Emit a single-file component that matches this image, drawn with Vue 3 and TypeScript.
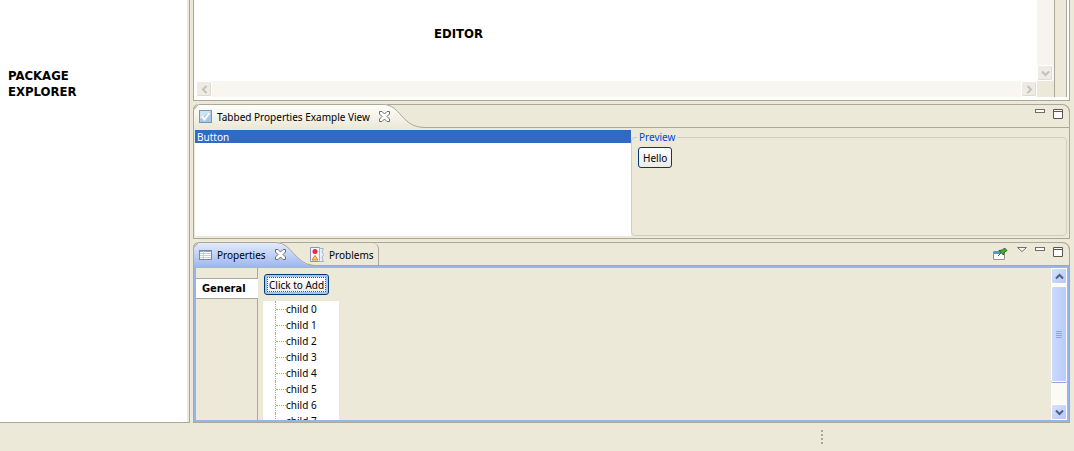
<script setup lang="ts">
import { ref } from 'vue'

const children = ref<string[]>(Array.from({ length: 8 }, (_, i) => `child ${i}`))
const selected = ref<number>(0)
const widgets: string[] = ['Button']

function addChild(): void {
  children.value.push(`child ${children.value.length}`)
}
</script>

<template>
  <div class="workbench">
    <div class="main">
      <aside class="explorer"><h2 class="area-title">PACKAGE<br />EXPLORER</h2></aside>

      <div class="stack">
        <section class="editor">
          <div class="editor-grid">
            <div class="canvas"><h2 class="area-title">EDITOR</h2></div>
            <div class="vtrack">
              <button class="scroll-btn off" aria-label="Scroll down">
                <svg width="9" height="9" viewBox="0 0 9 9"><path d="M1 2.5l3.5 3.5L8 2.5" /></svg>
              </button>
            </div>
            <div class="htrack">
              <button class="scroll-btn off" aria-label="Scroll left">
                <svg width="9" height="9" viewBox="0 0 9 9"><path d="M6.500 1L3 4.500L6.500 8" /></svg>
              </button>
              <button class="scroll-btn off" aria-label="Scroll right">
                <svg width="9" height="9" viewBox="0 0 9 9"><path d="M2.500 1L6 4.500L2.500 8" /></svg>
              </button>
            </div>
            <div class="corner"></div>
          </div>
          <div class="ruler"></div>
        </section>

        <section class="view">
          <header class="tabbar">
            <div class="tab example">
              <svg class="shape" width="236" height="24" viewBox="0 0 236 24">
                <defs>
                  <linearGradient id="pale" x1="0" y1="0" x2="0" y2="1">
                    <stop offset="0" stop-color="#fff" /><stop offset="1" stop-color="#ece9d8" />
                  </linearGradient>
                </defs>
                <path d="M0 24V6L5 0H190C206 0 208 23 232 23.500H236V24Z" fill="url(#pale)" />
                <path d="M0.500 24V6L5.500 0.500H190C208 0.500 208 23.500 232 23.500H236" fill="none" stroke="#aca899" />
              </svg>
              <button class="tab-label">
                <svg width="13" height="13" viewBox="0 0 13 13">
                  <rect x=".5" y=".5" width="12" height="12" fill="#a9c8e6" stroke="#7795b5" />
                  <path d="M1 1h11L1 9z" fill="#cfe2f3" />
                  <path d="M3 6.500l2.500 3L10.500 3" fill="none" stroke="#fff" stroke-width="2" />
                </svg>
                <span>Tabbed Properties Example View</span>
              </button>
              <button class="close" aria-label="Close Tabbed Properties Example View">
                <svg width="11" height="11" viewBox="0 0 11 11"><path d="M.5.5h2.500l2.500 2.500L8 .5h2.500V3L8 5.500l2.500 2.500v2.500H8L5.500 8 3 10.500H.5V8L3 5.500.5 3z" /></svg>
              </button>
            </div>
            <div class="tools">
              <button aria-label="Minimize"><svg width="12" height="12" viewBox="0 0 12 12"><rect x="1.500" y="1.500" width="9" height="3" fill="#fff" stroke="#716f64" /></svg></button>
              <button aria-label="Maximize"><svg width="12" height="12" viewBox="0 0 12 12"><path d="M1.500 1.500h9v9h-9zM1.500 3.500h9" fill="#fff" stroke="#5a584d" /></svg></button>
            </div>
          </header>
          <div class="example-body">
            <ul class="list">
              <li v-for="(name, i) in widgets" :key="name" :class="{ chosen: selected === i }" @click="selected = i">{{ name }}</li>
            </ul>
            <fieldset class="preview">
              <legend>Preview</legend>
              <button class="xp">Hello</button>
            </fieldset>
          </div>
        </section>

        <section class="view active">
          <header class="tabbar">
            <div class="tab props">
              <svg class="shape" width="126" height="26" viewBox="0 0 126 26">
                <defs>
                  <linearGradient id="blue" x1="0" y1="0" x2="0" y2="1">
                    <stop offset="0" stop-color="#e6edfc" /><stop offset="1" stop-color="#99b4ee" />
                  </linearGradient>
                </defs>
                <path d="M0 26V6L5 0H83C99 0 102 23 121 24H126V26Z" fill="url(#blue)" />
                <path d="M0.500 26V6L5.500 0.500H83C99 0.500 102 22.500 121 23.500H126" fill="none" stroke="#aca899" />
              </svg>
              <button class="tab-label">
                <svg width="13" height="12" viewBox="0 0 13 12">
                  <rect x=".5" y="1.500" width="12" height="9" fill="#fff" stroke="#7587a8" />
                  <path d="M1 2.500h11" stroke="#8aa3d0" />
                  <path d="M1 4.500h11M1 6.500h11M1 8.500h11M4.500 2v8" stroke="#c9cfda" />
                </svg>
                <span>Properties</span>
              </button>
              <button class="close" aria-label="Close Properties">
                <svg width="11" height="11" viewBox="0 0 11 11"><path d="M.5.5h2.500l2.500 2.500L8 .5h2.500V3L8 5.500l2.500 2.500v2.500H8L5.500 8 3 10.500H.5V8L3 5.500.5 3z" /></svg>
              </button>
            </div>
            <button class="tab-label problems">
              <svg width="14" height="16" viewBox="0 0 14 16">
                <path d="M.5.5h9v14h-9z" fill="#f5f4ff" stroke="#8b94bd" />
                <path d="M9.500 1.500h4l-1.500 3 1.500 3-1.500 3 1.500 4h-4z" fill="#e9f0fb" stroke="#a5b2cf" />
                <circle cx="5" cy="4.500" r="2.500" fill="#e0303c" />
                <path d="M5 8.500l3 4.500H2z" fill="#f8d64e" stroke="#c98a1c" />
              </svg>
              <span>Problems</span>
            </button>
            <div class="tools">
              <button class="pin" aria-label="Pin view">
                <svg width="15" height="14" viewBox="0 0 15 14">
                  <path d="M.5 4.500h11v8H.5z" fill="#fff" stroke="#9a9684" />
                  <path d="M1 5.500h7" stroke="#4e9ad4" stroke-width="3" />
                  <path d="M5 9l3-3" stroke="#555" />
                  <path d="M6 3.500l4.500 4.500 1-3 2.500-1.500L11.500 1 9.500 3z" fill="#4fa64f" stroke="#1c641f" />
                </svg>
              </button>
              <button aria-label="View menu"><svg width="12" height="12" viewBox="0 0 12 12"><path d="M1.500 1.500h9L6 5.500z" fill="#fff" stroke="#716f64" /></svg></button>
              <button aria-label="Minimize"><svg width="12" height="12" viewBox="0 0 12 12"><rect x="1.500" y="1.500" width="9" height="3" fill="#fff" stroke="#716f64" /></svg></button>
              <button aria-label="Maximize"><svg width="12" height="12" viewBox="0 0 12 12"><path d="M1.500 1.500h9v9h-9zM1.500 3.500h9" fill="#fff" stroke="#5a584d" /></svg></button>
            </div>
          </header>
          <div class="props-body">
            <nav class="categories"><button class="category">General</button></nav>
            <div class="content">
              <button class="xp focused" @click="addChild">Click to Add</button>
              <ul class="tree"><li v-for="c in children" :key="c">{{ c }}</li></ul>
            </div>
            <div class="scrollbar">
              <button class="scroll-btn" aria-label="Scroll up"><svg width="9" height="9" viewBox="0 0 9 9"><path d="M1 6.500L4.500 3L8 6.500" /></svg></button>
              <div class="thumb"><i></i><i></i><i></i><i></i></div>
              <div class="rest"></div>
              <button class="scroll-btn" aria-label="Scroll down"><svg width="9" height="9" viewBox="0 0 9 9"><path d="M1 2.500L4.500 6L8 2.500" /></svg></button>
            </div>
          </div>
        </section>
      </div>
    </div>
    <footer class="status"><span class="grip"><i></i><i></i><i></i><i></i></span></footer>
  </div>
</template>

<style>
body { margin: 0; background: #ece9d8; }
</style>

<style scoped>
* { box-sizing: border-box; }
button { font: inherit; color: inherit; border: 0; padding: 0; margin: 0; background: none; }
svg { display: block; flex: none; }
ul { list-style: none; margin: 0; padding: 0; }
.workbench {
  height: 100vh; display: flex; flex-direction: column; overflow: hidden;
  background: #ece9d8; color: #000;
  font: 10px/14px "Noto Sans", "DejaVu Sans Condensed", sans-serif;
}
.main { flex: 1; min-height: 0; display: flex; gap: 3px; padding-right: 4px; }
.explorer {
  width: 190px; flex: none; background: #fff; padding: 68px 8px;
  border-right: 1px solid #aca899; border-bottom: 1px solid #aca899;
  box-shadow: inset -2px 0 #ece9d8;
}
.area-title { margin: 0; font: bold 13px/16px "DejaVu Sans Condensed", "DejaVu Sans", sans-serif; }
.stack { flex: 1; min-width: 0; display: flex; flex-direction: column; gap: 3px; }

.editor { height: 101px; flex: none; display: flex; border: 1px solid #aca899; border-top: 0; padding: 0 2px 3px 0; background: #fff; }
.editor-grid { flex: 1; display: grid; grid-template: 1fr 16px / 1fr 17px; padding-left: 2px; border-right: 1px solid #aca899; }
.canvas { padding: 26px 0 0 238px; }
.vtrack { background: #f5f4ef; display: flex; align-items: flex-end; }
.htrack { background: #f7f6f1; display: flex; justify-content: space-between; }
.corner { background: #ece9d8; }
.ruler { width: 12px; background: #ece9d8; border-right: 1px solid #aca899; }

.scroll-btn {
  width: 16px; height: 16px; flex: none; display: grid; place-items: center;
  border: 1px solid #fff; border-radius: 2px;
  background: linear-gradient(135deg, #d5e1ff, #b5c8f5);
}
.scroll-btn path { fill: none; stroke: #4d6185; stroke-width: 2; }
.scroll-btn.off { background: #edebe3; box-shadow: inset -1px -1px #dedbd0; }
.scroll-btn.off path { stroke: #c3c1b8; }

.view { height: 135px; flex: none; display: flex; flex-direction: column; border: 1px solid #aca899; border-top: 0; border-radius: 6px 8px 0 0; }
.view.active { height: auto; flex: 1; min-height: 0; }
.tabbar { height: 24px; flex: none; display: flex; margin: 0 -1px; border: 1px solid #aca899; border-radius: 6px 8px 0 0; }
.tab { position: relative; display: flex; align-items: center; margin: -1px; padding: 1px 0 0 6px; flex: none; }
.example { width: 236px; }
.props { width: 112px; }
.shape { position: absolute; left: 0; top: 0; }
.tab-label { position: relative; display: flex; align-items: center; gap: 5px; white-space: nowrap; }
.close { position: relative; margin-left: 9px; }
.close path { fill: #fff; stroke: #716f64; }
.problems { padding: 1px 4px 0 6px; border-right: 1px solid #aca899; border-radius: 0 6px 0 0; }
.tools { margin-left: auto; display: flex; gap: 6px; padding: 3px 5px 0 0; align-items: flex-start; }
.pin { padding-top: 1px; margin-right: 2px; }

.example-body { flex: 1; min-height: 0; display: grid; grid-template-columns: 1fr 1fr; padding: 2px 2px 2px 1px; }
.list { background: #fff; }
.list li { height: 13px; line-height: 14px; padding-left: 2px; }
.list .chosen { background: #316ac5; color: #fff; }
.preview { min-width: 0; margin: 0; padding: 3px 6px; border: 1px solid #d0cfbf; border-radius: 4px; }
.preview legend { color: #0046d5; padding: 0 2px; margin-left: -1px; }
.xp {
  display: block; height: 21px; padding: 0 4px; white-space: nowrap;
  border: 1px solid #003c74; border-radius: 3px; background: linear-gradient(#fff, #ecebe6);
}
.focused { box-shadow: inset 0 0 0 2px #a9c3ef; outline: 1px dotted #555; outline-offset: -4px; }

.props-body { flex: 1; min-height: 0; display: flex; border: 2px solid #99b4ea; overflow: hidden; }
.categories { width: 62px; flex: none; padding-top: 10px; border-right: 1px solid #aca899; }
.category {
  display: block; width: 62px; height: 21px; padding-left: 6px; text-align: left;
  font: bold 11px/14px "DejaVu Sans Condensed", "DejaVu Sans", sans-serif;
  background: #fff; border-top: 1px solid #aca899; border-bottom: 1px solid #aca899;
}
.content { flex: 1; padding: 6px 5px 0; overflow: hidden; }
.content .xp { margin-left: 1px; }
.tree { width: 76px; margin-top: 6px; background: #fff; padding-left: 12px; }
.tree li { position: relative; height: 16px; line-height: 16px; padding-left: 10px; border-left: 1px dotted #aca899; }
.tree li::before { content: ""; position: absolute; left: 0; top: 8px; width: 10px; border-top: 1px dotted #aca899; }
.scrollbar { width: 16px; flex: none; display: flex; flex-direction: column; background: #fbfaf5; }
.thumb {
  flex: 96; border: 1px solid #fff; border-radius: 2px; box-shadow: 0 1px #8ea9dd; margin-top: 2px;
  background: linear-gradient(90deg, #cbdaff, #b9cbf8);
  display: flex; flex-direction: column; align-items: center; justify-content: center; gap: 1px;
}
.thumb i { width: 6px; height: 1px; background: #8ba5e0; }
.rest { flex: 22; }

.status { height: 28px; flex: none; }
.grip { display: flex; flex-direction: column; gap: 2px; width: 2px; margin: 7px 0 0 821px; }
.grip i { width: 2px; height: 2px; background: #aca899; }
</style>
